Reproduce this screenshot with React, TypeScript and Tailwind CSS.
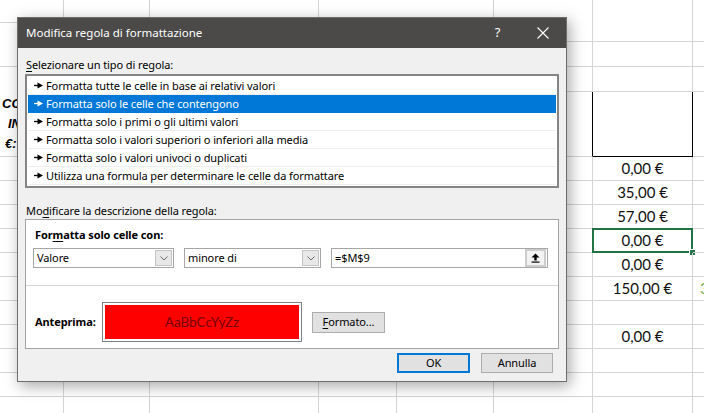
import React from "react";

const ui = { fontFamily: '"Segoe UI", "Noto Sans", sans-serif' };
const cell = { fontFamily: 'Lato, "Liberation Sans", sans-serif' };

const values: Record<number, string> = {
  5: "0,00 €",
  6: "35,00 €",
  7: "57,00 €",
  8: "0,00 €",
  9: "0,00 €",
  10: "150,00 €",
  12: "0,00 €",
};

const regole = [
  "Formatta tutte le celle in base ai relativi valori",
  "Formatta solo le celle che contengono",
  "Formatta solo i primi o gli ultimi valori",
  "Formatta solo i valori superiori o inferiori alla media",
  "Formatta solo i valori univoci o duplicati",
  "Utilizza una formula per determinare le celle da formattare",
];

const Freccia = () => (
  <svg width="9" height="7" viewBox="0 0 9 7" className="shrink-0">
    <path d="M0 3.5h4" stroke="currentColor" strokeWidth="1.3" />
    <path d="M3.5 0.5 L9 3.5 L3.5 6.5Z" fill="currentColor" />
  </svg>
);

const Chevron = () => (
  <svg width="8" height="5" viewBox="0 0 8 5">
    <path d="M0.5 0.5 L4 4 L7.5 0.5" fill="none" stroke="#6b6b6b" strokeWidth="1" />
  </svg>
);

const Tendina = ({ testo, w }: { testo: string; w: string }) => (
  <div className={`flex h-[20px] items-center border border-[#a6a6a6] bg-white ${w}`}>
    <span className="pl-[3px]">{testo}</span>
    <div className="ml-auto mr-[1px] flex h-[16px] w-[17px] items-center justify-center border border-[#c4c4c4] bg-[#e8e8e8]">
      <Chevron />
    </div>
  </div>
);

function Foglio() {
  const rows = 17;
  const cols = 8;
  const celle = [];
  for (let r = 0; r < rows; r++) {
    for (let c = 0; c < cols; c++) {
      let bordo = "border-r border-b border-[#d4d4d4]";
      if (r === 0 && c !== 0) bordo = c === 3 ? "" : "border-r border-[#d4d4d4]";
      if (r === 1 && c === 0) bordo = "border-r border-[#d4d4d4]";
      if (r === 3 && c === 0) bordo = "border-r border-[#d4d4d4]";
      if (r === 4 && c === 5) bordo = "border-r border-b border-r-black border-b-[#d4d4d4]";
      if (r === 4 && c === 6) bordo = "border-r border-b border-black";
      celle.push(
        <div key={`${r}-${c}`} className={`relative flex items-center justify-center ${bordo}`}>
          {r === 4 && c === 0 && (
            <div className="absolute left-0 top-[2px] text-[13px] font-bold italic leading-[20px] text-black" style={{ fontFamily: '"Liberation Sans", sans-serif' }}>
              <div className="ml-[2px]">CO</div>
              <div className="ml-[8px]">IN</div>
              <div className="ml-[5px]">€:</div>
            </div>
          )}
          {c === 6 && values[r] && (
            <span className="text-[15px] text-[#111]" style={cell}>
              {values[r]}
            </span>
          )}
          {c === 7 && r === 10 && (
            <span className="absolute left-[7px] text-[15px] text-[#70ad47]" style={cell}>
              3
            </span>
          )}
          {c === 6 && r === 8 && (
            <>
              <div className="absolute inset-[-1px] border-2 border-[#217346]" />
              <div className="absolute bottom-[-4px] right-[-4px] h-[7px] w-[7px] border border-white bg-[#217346]" />
            </>
          )}
        </div>
      );
    }
  }
  return (
    <div className="grid h-[413px] w-[704px] grid-cols-[64px_86px_169px_78px_97px_99px_100px_40px] grid-rows-[23px_19px_25px_25px_65px_repeat(12,24px)] overflow-hidden bg-white">
      {celle}
    </div>
  );
}

function Dialogo() {
  return (
    <div
      className="absolute left-[17px] top-[17px] flex h-[365px] w-[550px] flex-col border border-[#6e6e6e] bg-[#f0f0f0] text-[11px] tracking-[-0.1px] text-black shadow-[3px_4px_14px_rgba(0,0,0,0.35)]"
      style={ui}
    >
      <div className="flex h-[30px] shrink-0 items-center bg-[#4b4a48] text-white">
        <span className="pl-[8px] text-[11.5px] tracking-normal">Modifica regola di formattazione</span>
        <div className="ml-auto flex h-full">
          <div className="flex w-[45px] items-center justify-center text-[13px]">?</div>
          <div className="flex w-[46px] items-center justify-center">
            <svg width="12" height="12" viewBox="0 0 12 12">
              <path d="M0.5 0.5 L11.5 11.5 M11.5 0.5 L0.5 11.5" stroke="white" strokeWidth="1.1" />
            </svg>
          </div>
        </div>
      </div>

      <div className="flex flex-col px-[7px]">
        <div className="ml-[1px] mt-[9px] h-[16px] leading-[16px]">
          <span className="underline underline-offset-2">S</span>elezionare un tipo di regola:
        </div>
        <div className="mt-[1px] h-[114px] border-2 border-[#858585] bg-white p-[1px]">
          {regole.map((t, i) => (
            <div
              key={t}
              className={`flex h-[18px] items-center gap-[3px] border-b pl-[6px] leading-[17px] ${
                i === 1 ? "border-[#0078d7] bg-[#0078d7] text-white" : "border-[#eeeeee] text-black"
              }`}
            >
              <Freccia />
              <span>{t}</span>
            </div>
          ))}
        </div>

        <div className="ml-[1px] mt-[15px] h-[16px] leading-[16px]">
          Mo<span className="underline underline-offset-2">d</span>ificare la descrizione della regola:
        </div>
        <div className="flex h-[130px] flex-col border border-[#a3a3a3] bg-white">
          <div className="mt-[7px] h-[16px] pl-[9px] font-bold leading-[16px]">
            For<span className="underline underline-offset-2">m</span>atta solo celle con:
          </div>
          <div className="mt-[5px] flex gap-[10px] pl-[7px]">
            <Tendina testo="Valore" w="w-[141px]" />
            <Tendina testo="minore di" w="w-[137px]" />
            <div className="flex h-[20px] w-[217px] items-center border border-[#a6a6a6] bg-white">
              <span className="pl-[3px]">=$M$9</span>
              <div className="ml-auto mr-[1px] flex h-[18px] w-[21px] items-center justify-center border-2 border-[#cccccc] bg-[#f3f3f3]">
                <svg width="9" height="10" viewBox="0 0 9 10">
                  <path d="M0.5 4.5 L4.5 0.5 L8.5 4.5Z" fill="black" />
                  <rect x="3.3" y="4" width="2.4" height="3.5" fill="black" />
                  <rect x="0.5" y="8.5" width="8" height="1.2" fill="black" />
                </svg>
              </div>
            </div>
          </div>
          <div className="mt-[17px] h-px bg-[#d6d6d6]" />
          <div className="mt-[16px] flex items-center pl-[9px]">
            <div className="w-[67px] font-bold">Anteprima:</div>
            <div className="h-[40px] w-[200px] border border-[#7f7f7f] p-[2px]">
              <div className="flex h-full items-center justify-center bg-[#ff0000] text-[13.5px] tracking-normal text-[#780000]" style={cell}>
                AaBbCcYyZz
              </div>
            </div>
            <div className="ml-[10px] flex h-[21px] w-[73px] items-center justify-center border border-[#adadad] bg-[#e1e1e1]">
              <span>
                <span className="underline underline-offset-2">F</span>ormato...
              </span>
            </div>
          </div>
        </div>

        <div className="mt-[4px] flex justify-end gap-[11px] pr-[6px]">
          <div className="flex h-[20px] w-[73px] items-center justify-center border-2 border-[#0078d7] bg-[#e1e1e1]">OK</div>
          <div className="flex h-[20px] w-[72px] items-center justify-center border border-[#adadad] bg-[#e1e1e1]">Annulla</div>
        </div>
      </div>
    </div>
  );
}

export default function App() {
  return (
    <div className="relative h-[413px] w-[704px] overflow-hidden bg-white">
      <Foglio />
      <Dialogo />
    </div>
  );
}
